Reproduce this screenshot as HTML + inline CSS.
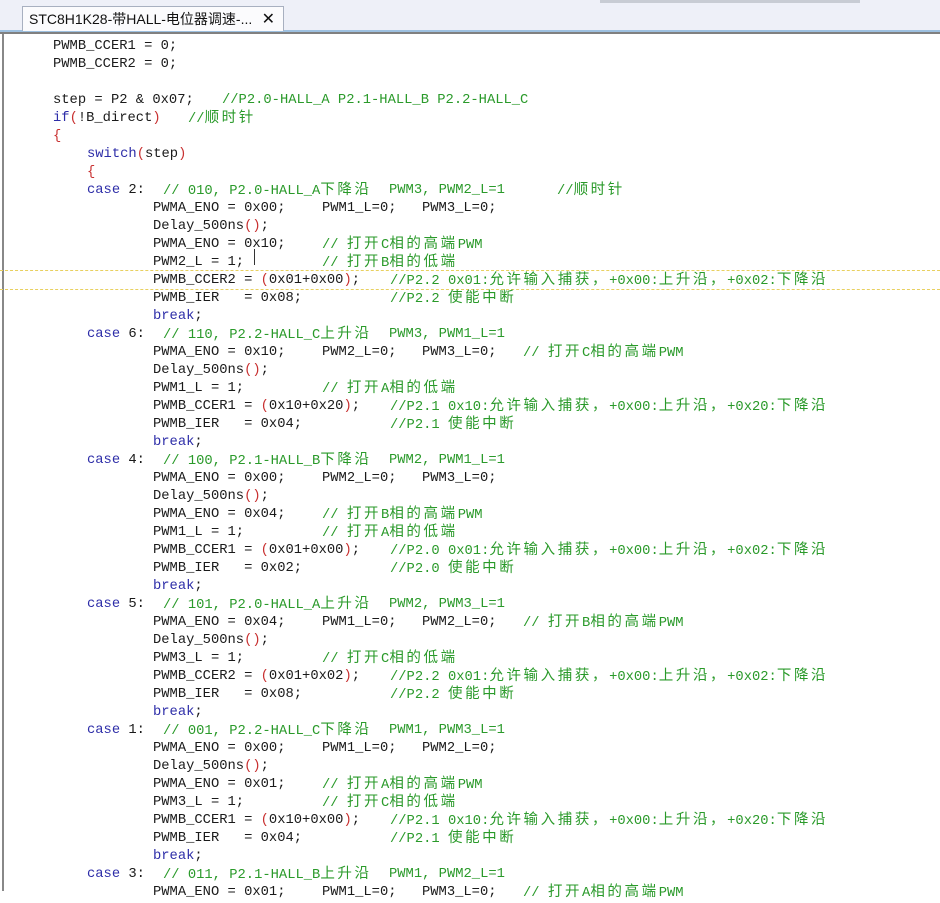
<!DOCTYPE html>
<html><head><meta charset="utf-8"><style>
body{margin:0;width:940px;height:891px;overflow:hidden;background:#fff;position:relative;font-family:"Liberation Mono","Noto Sans CJK SC",monospace;}
#bar{position:absolute;left:0;top:0;width:940px;height:30px;background:#eef0f8;border-bottom:2px solid #9dc0e0}
#bar2{position:absolute;left:0;top:32px;width:940px;height:2px;background:#808080}
#tab{position:absolute;left:22px;top:6px;width:262px;height:25px;background:#fbfbfd;border:1px solid #a8b0c0;border-bottom:none;font:14px "Liberation Sans","Noto Sans CJK SC",sans-serif;color:#111;line-height:25px;padding-left:6px;box-sizing:border-box}
#tab b{position:absolute;right:8px;top:0;font-weight:normal;font-size:16px}
#lb{position:absolute;left:2px;top:34px;width:2px;height:857px;background:#888}
.l{position:absolute;height:18px;line-height:18px;font-size:13.8px;color:#1a1a1a;white-space:pre;left:0;width:940px}
.l i{position:absolute;font-style:normal;top:0}
.g{color:#2a9a2a}.k{color:#2d2da8}.r{color:#c83030}
.z{font-size:14.5px;letter-spacing:2.6px}
#hl{position:absolute;left:0;top:270px;width:940px;height:18px;border-top:1px dashed #e8d060;border-bottom:1px dashed #e8d060}
</style></head><body>
<div id="bar"></div><div id="bar2"></div>
<div style="position:absolute;left:600px;top:0;width:260px;height:3px;background:#c8ccd4"></div>
<div id="tab">STC8H1K28-带HALL-电位器调速-...<b>✕</b></div>
<div id="lb"></div>
<div id="hl"></div>
<div style="position:absolute;left:254px;top:249px;width:1px;height:16px;background:#333"></div>

<div class="l" style="top:38px"><i style="left:53px">PWMB_CCER1 = 0;</i></div>
<div class="l" style="top:56px"><i style="left:53px">PWMB_CCER2 = 0;</i></div>
<div class="l" style="top:92px"><i style="left:53px">step = P2 &amp; 0x07;</i><i class="g" style="left:222px">//P2.0-HALL_A P2.1-HALL_B P2.2-HALL_C</i></div>
<div class="l" style="top:110px"><i style="left:53px"><span class="k">if</span><span class="r">(</span>!B_direct<span class="r">)</span></i><i class="g" style="left:188px">//<span class="z">顺时针</span></i></div>
<div class="l" style="top:128px"><i class="r" style="left:53px">{</i></div>
<div class="l" style="top:146px"><i style="left:87px"><span class="k">switch</span><span class="r">(</span>step<span class="r">)</span></i></div>
<div class="l" style="top:164px"><i class="r" style="left:87px">{</i></div>

<div class="l" style="top:182px"><i class="k" style="left:87px">case <span style="color:#1a1a1a">2:</span></i><i class="g" style="left:163px">// 010, P2.0-HALL_A<span class="z">下降沿</span></i><i class="g" style="left:389px">PWM3, PWM2_L=1</i><i class="g" style="left:557px">//<span class="z">顺时针</span></i></div>
<div class="l" style="top:200px"><i style="left:153px">PWMA_ENO = 0x00;</i><i style="left:322px">PWM1_L=0;</i><i style="left:422px">PWM3_L=0;</i></div>
<div class="l" style="top:218px"><i style="left:153px">Delay_500ns<span class="r">()</span>;</i></div>
<div class="l" style="top:236px"><i style="left:153px">PWMA_ENO = 0x10;</i><i class="g" style="left:322px">// <span class="z">打开</span>C<span class="z">相的高端</span>PWM</i></div>
<div class="l" style="top:254px"><i style="left:153px">PWM2_L = 1;</i><i class="g" style="left:322px">// <span class="z">打开</span>B<span class="z">相的低端</span></i></div>
<div class="l" style="top:272px"><i style="left:153px">PWMB_CCER2 = <span class="r">(</span>0x01+0x00<span class="r">)</span>;</i><i class="g" style="left:390px">//P2.2 0x01:<span class="z">允许输入捕获，</span>+0x00:<span class="z">上升沿，</span>+0x02:<span class="z">下降沿</span></i></div>
<div class="l" style="top:290px"><i style="left:153px">PWMB_IER   = 0x08;</i><i class="g" style="left:390px">//P2.2 <span class="z">使能中断</span></i></div>
<div class="l" style="top:308px"><i class="k" style="left:153px">break<span style="color:#1a1a1a">;</span></i></div>

<div class="l" style="top:326px"><i class="k" style="left:87px">case <span style="color:#1a1a1a">6:</span></i><i class="g" style="left:163px">// 110, P2.2-HALL_C<span class="z">上升沿</span></i><i class="g" style="left:389px">PWM3, PWM1_L=1</i></div>
<div class="l" style="top:344px"><i style="left:153px">PWMA_ENO = 0x10;</i><i style="left:322px">PWM2_L=0;</i><i style="left:422px">PWM3_L=0;</i><i class="g" style="left:523px">// <span class="z">打开</span>C<span class="z">相的高端</span>PWM</i></div>
<div class="l" style="top:362px"><i style="left:153px">Delay_500ns<span class="r">()</span>;</i></div>
<div class="l" style="top:380px"><i style="left:153px">PWM1_L = 1;</i><i class="g" style="left:322px">// <span class="z">打开</span>A<span class="z">相的低端</span></i></div>
<div class="l" style="top:398px"><i style="left:153px">PWMB_CCER1 = <span class="r">(</span>0x10+0x20<span class="r">)</span>;</i><i class="g" style="left:390px">//P2.1 0x10:<span class="z">允许输入捕获，</span>+0x00:<span class="z">上升沿，</span>+0x20:<span class="z">下降沿</span></i></div>
<div class="l" style="top:416px"><i style="left:153px">PWMB_IER   = 0x04;</i><i class="g" style="left:390px">//P2.1 <span class="z">使能中断</span></i></div>
<div class="l" style="top:434px"><i class="k" style="left:153px">break<span style="color:#1a1a1a">;</span></i></div>

<div class="l" style="top:452px"><i class="k" style="left:87px">case <span style="color:#1a1a1a">4:</span></i><i class="g" style="left:163px">// 100, P2.1-HALL_B<span class="z">下降沿</span></i><i class="g" style="left:389px">PWM2, PWM1_L=1</i></div>
<div class="l" style="top:470px"><i style="left:153px">PWMA_ENO = 0x00;</i><i style="left:322px">PWM2_L=0;</i><i style="left:422px">PWM3_L=0;</i></div>
<div class="l" style="top:488px"><i style="left:153px">Delay_500ns<span class="r">()</span>;</i></div>
<div class="l" style="top:506px"><i style="left:153px">PWMA_ENO = 0x04;</i><i class="g" style="left:322px">// <span class="z">打开</span>B<span class="z">相的高端</span>PWM</i></div>
<div class="l" style="top:524px"><i style="left:153px">PWM1_L = 1;</i><i class="g" style="left:322px">// <span class="z">打开</span>A<span class="z">相的低端</span></i></div>
<div class="l" style="top:542px"><i style="left:153px">PWMB_CCER1 = <span class="r">(</span>0x01+0x00<span class="r">)</span>;</i><i class="g" style="left:390px">//P2.0 0x01:<span class="z">允许输入捕获，</span>+0x00:<span class="z">上升沿，</span>+0x02:<span class="z">下降沿</span></i></div>
<div class="l" style="top:560px"><i style="left:153px">PWMB_IER   = 0x02;</i><i class="g" style="left:390px">//P2.0 <span class="z">使能中断</span></i></div>
<div class="l" style="top:578px"><i class="k" style="left:153px">break<span style="color:#1a1a1a">;</span></i></div>

<div class="l" style="top:596px"><i class="k" style="left:87px">case <span style="color:#1a1a1a">5:</span></i><i class="g" style="left:163px">// 101, P2.0-HALL_A<span class="z">上升沿</span></i><i class="g" style="left:389px">PWM2, PWM3_L=1</i></div>
<div class="l" style="top:614px"><i style="left:153px">PWMA_ENO = 0x04;</i><i style="left:322px">PWM1_L=0;</i><i style="left:422px">PWM2_L=0;</i><i class="g" style="left:523px">// <span class="z">打开</span>B<span class="z">相的高端</span>PWM</i></div>
<div class="l" style="top:632px"><i style="left:153px">Delay_500ns<span class="r">()</span>;</i></div>
<div class="l" style="top:650px"><i style="left:153px">PWM3_L = 1;</i><i class="g" style="left:322px">// <span class="z">打开</span>C<span class="z">相的低端</span></i></div>
<div class="l" style="top:668px"><i style="left:153px">PWMB_CCER2 = <span class="r">(</span>0x01+0x02<span class="r">)</span>;</i><i class="g" style="left:390px">//P2.2 0x01:<span class="z">允许输入捕获，</span>+0x00:<span class="z">上升沿，</span>+0x02:<span class="z">下降沿</span></i></div>
<div class="l" style="top:686px"><i style="left:153px">PWMB_IER   = 0x08;</i><i class="g" style="left:390px">//P2.2 <span class="z">使能中断</span></i></div>
<div class="l" style="top:704px"><i class="k" style="left:153px">break<span style="color:#1a1a1a">;</span></i></div>

<div class="l" style="top:722px"><i class="k" style="left:87px">case <span style="color:#1a1a1a">1:</span></i><i class="g" style="left:163px">// 001, P2.2-HALL_C<span class="z">下降沿</span></i><i class="g" style="left:389px">PWM1, PWM3_L=1</i></div>
<div class="l" style="top:740px"><i style="left:153px">PWMA_ENO = 0x00;</i><i style="left:322px">PWM1_L=0;</i><i style="left:422px">PWM2_L=0;</i></div>
<div class="l" style="top:758px"><i style="left:153px">Delay_500ns<span class="r">()</span>;</i></div>
<div class="l" style="top:776px"><i style="left:153px">PWMA_ENO = 0x01;</i><i class="g" style="left:322px">// <span class="z">打开</span>A<span class="z">相的高端</span>PWM</i></div>
<div class="l" style="top:794px"><i style="left:153px">PWM3_L = 1;</i><i class="g" style="left:322px">// <span class="z">打开</span>C<span class="z">相的低端</span></i></div>
<div class="l" style="top:812px"><i style="left:153px">PWMB_CCER1 = <span class="r">(</span>0x10+0x00<span class="r">)</span>;</i><i class="g" style="left:390px">//P2.1 0x10:<span class="z">允许输入捕获，</span>+0x00:<span class="z">上升沿，</span>+0x20:<span class="z">下降沿</span></i></div>
<div class="l" style="top:830px"><i style="left:153px">PWMB_IER   = 0x04;</i><i class="g" style="left:390px">//P2.1 <span class="z">使能中断</span></i></div>
<div class="l" style="top:848px"><i class="k" style="left:153px">break<span style="color:#1a1a1a">;</span></i></div>

<div class="l" style="top:866px"><i class="k" style="left:87px">case <span style="color:#1a1a1a">3:</span></i><i class="g" style="left:163px">// 011, P2.1-HALL_B<span class="z">上升沿</span></i><i class="g" style="left:389px">PWM1, PWM2_L=1</i></div>
<div class="l" style="top:884px"><i style="left:153px">PWMA_ENO = 0x01;</i><i style="left:322px">PWM1_L=0;</i><i style="left:422px">PWM3_L=0;</i><i class="g" style="left:523px">// <span class="z">打开</span>A<span class="z">相的高端</span>PWM</i></div>
</body></html>
